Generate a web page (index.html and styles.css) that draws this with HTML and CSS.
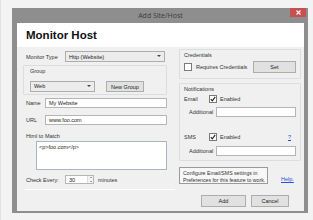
FILE: index.html
```html
<!DOCTYPE html>
<html>
<head>
<meta charset="utf-8">
<link rel="stylesheet" href="styles.css">
</head>
<body>
<div class="screen">
  <div class="window">
    <div class="titlebar">
      <span class="title">Add Site/Host</span>
      <span class="close"><svg width="5" height="5" viewBox="0 0 5 5"><path d="M0.5 0.5L4.5 4.5M4.5 0.5L0.5 4.5" stroke="#fff" stroke-width="1.1"/></svg></span>
    </div>
    <div class="client">
      <div class="header">Monitor Host</div>
      <div class="body">
        <div class="left">
          <div class="row r-type">
            <span class="lbl w39">Monitor Type</span>
            <div class="select s-type">Http (Website)<span class="caret"></span></div>
          </div>
          <div class="gbox g-group">
            <div class="glabel">Group</div>
            <div class="row">
              <div class="select s-web">Web<span class="caret"></span></div>
              <div class="btn b-new">New Group</div>
            </div>
          </div>
          <div class="row r-name">
            <span class="lbl w19">Name</span>
            <div class="input i-long">My Website</div>
          </div>
          <div class="row r-url">
            <span class="lbl w19">URL</span>
            <div class="input i-long">www.foo.com</div>
          </div>
          <div class="lbl html-lbl">Html to Match</div>
          <div class="textarea">&lt;p&gt;foo.com&lt;/p&gt;</div>
          <div class="row r-check">
            <span class="lbl w39">Check Every:</span>
            <div class="spin"><span class="spin-val">30</span><span class="spin-btns"><span class="up"></span><span class="down"></span></span></div>
            <span class="lbl minutes">minutes</span>
          </div>
          <div class="sep"></div>
        </div>
        <div class="right">
          <div class="gbox g-cred">
            <div class="glabel">Credentials</div>
            <div class="row r-req">
              <span class="cb"></span>
              <span class="lbl req">Requires Credentials</span>
              <div class="btn b-set">Set</div>
            </div>
          </div>
          <div class="gbox g-notif">
            <div class="glabel">Notifications</div>
            <div class="row r-en">
              <span class="lbl w25">Email</span>
              <span class="cb on"><svg width="6" height="6" viewBox="0 0 6 6"><path d="M0.8 3.2L2.3 4.8L5.2 0.9" fill="none" stroke="#222" stroke-width="1.1"/></svg></span>
              <span class="lbl en">Enabled</span>
            </div>
            <div class="row r-add">
              <span class="lbl w28">Additional</span>
              <div class="input i-add"></div>
            </div>
            <div class="row r-en r-sms">
              <span class="lbl w25">SMS</span>
              <span class="cb on"><svg width="6" height="6" viewBox="0 0 6 6"><path d="M0.8 3.2L2.3 4.8L5.2 0.9" fill="none" stroke="#222" stroke-width="1.1"/></svg></span>
              <span class="lbl en">Enabled</span>
              <span class="q">?</span>
            </div>
            <div class="row r-add r-add2">
              <span class="lbl w28">Additional</span>
              <div class="input i-add"></div>
            </div>
          </div>
          <div class="row r-tip">
            <div class="tip">Configure Email/SMS settings in<br>Preferences for this feature to work.</div>
            <span class="help">Help.</span>
          </div>
          <div class="row r-btns">
            <div class="btn b-add">Add</div>
            <div class="btn b-cancel">Cancel</div>
          </div>
        </div>
      </div>
    </div>
  </div>
</div>
</body>
</html>
```
FILE: styles.css
```css
* { box-sizing: border-box; }
html, body { margin: 0; padding: 0; }
body {
  width: 313px;
  height: 220px;
  overflow: hidden;
  background: #f3f3f3;
  font-family: "Liberation Sans", Arial, sans-serif;
  font-size: 5.5px;
  color: #333;
}
.screen {
  width: 313px;
  height: 220px;
  padding: 8px 0 0 11px;
  border-left: 1px solid #e2e2e2;
}
.window {
  width: 296px;
  height: 205px;
  background: #8e8e8e;
  display: flex;
  flex-direction: column;
  padding: 0 4px 2px 5px;
}
.titlebar {
  height: 15px;
  display: flex;
  align-items: flex-start;
}
.title {
  flex: 1;
  text-align: center;
  padding-left: 14px;
  line-height: 15px;
  font-size: 7px;
  color: #3c3c3c;
  font-family: "Open Sans", "Liberation Sans", sans-serif;
}
.close {
  width: 16px;
  height: 9px;
  margin-right: -2px;
  background: #c75050;
  display: flex;
  align-items: center;
  justify-content: center;
}
.client {
  flex: 1;
  background: #f0f0f0;
  display: flex;
  flex-direction: column;
}
.header {
  height: 24px;
  background: #fff;
  padding-left: 9px;
  font-size: 11.5px;
  font-weight: bold;
  color: #111;
  line-height: 14px;
  padding-top: 5px;
}
.body {
  display: flex;
  padding: 0 0 0 9px;
}
.left { width: 141px; }
.right { width: 122px; margin-left: 12px; }
.row { display: flex; align-items: center; }
.lbl { white-space: nowrap; }
.w39 { width: 39px; }
.w19 { width: 19px; }
.w25 { width: 25px; }
.w28 { width: 28px; }
.select, .input, .textarea, .spin {
  background: #fff;
  border: 1px solid #b5b5b5;
  color: #222;
  position: relative;
  white-space: nowrap;
  padding-left: 3px;
}
.select { background: #ececec; border-color: #adadad; display: flex; align-items: center; }
.caret {
  position: absolute;
  right: 3px;
  top: 3px;
  width: 0;
  height: 0;
  border-left: 2px solid transparent;
  border-right: 2px solid transparent;
  border-top: 2.5px solid #444;
}
.r-type { margin-top: 4px; height: 11px; }
.s-type { width: 100px; height: 11px; }
.gbox { border: 1px solid #dadde2; border-radius: 1px; }
.g-group {
  margin: 3px 0 0 -3px;
  width: 144px;
  height: 30px;
  padding: 1px 0 0 6px;
}
.glabel { line-height: 8px; }
.g-group .row { margin-top: 5px; }
.s-web { width: 65px; height: 11px; }
.btn {
  background: #e1e1e1;
  border: 1px solid #adadad;
  display: flex;
  align-items: center;
  justify-content: center;
  color: #222;
}
.b-new { width: 38px; height: 11px; margin-left: 11px; margin-top: 1px; }
.r-name { margin-top: 3px; height: 10px; }
.r-url { margin-top: 7px; height: 10px; }
.input { height: 10px; display: flex; align-items: center; }
.i-long { width: 122px; }
.html-lbl { margin-top: 7px; line-height: 8px; }
.textarea {
  margin: 1px 0 0 10px;
  width: 131px;
  height: 29px;
  padding: 2px 2px;
  border-color: #a9b6c4;
}
.r-check { margin-top: 5px; height: 9px; }
.spin { width: 29px; height: 9px; display: flex; align-items: center; justify-content: space-between; padding-right: 0; }
.spin-btns { width: 6px; height: 100%; display: flex; flex-direction: column; align-items: center; justify-content: space-around; border-left: 1px solid #ddd; background: #f3f3f3; }
.up { border-left: 1.5px solid transparent; border-right: 1.5px solid transparent; border-bottom: 1.5px solid #555; }
.down { border-left: 1.5px solid transparent; border-right: 1.5px solid transparent; border-top: 1.5px solid #555; }
.minutes { margin-left: 4px; }
.sep { margin-top: 5px; height: 1px; background: #a0a0a0; width: 150px; margin-left: -1px; border-bottom: 1px solid #fff; }

.g-cred { margin-top: 2px; height: 30px; padding: 0 4px 0 4px; }
.g-cred .glabel { margin-top: 1px; }
.r-req { margin-top: 2px; }
.cb {
  width: 8px; height: 8px;
  background: #fff;
  border: 1px solid #7a7a7a;
  display: flex; align-items: center; justify-content: center;
  flex-shrink: 0;
}
.req { margin-left: 4px; }
.b-set { width: 43px; height: 12px; margin-left: auto; }
.g-notif { margin-top: 4px; height: 78px; padding: 0 4px; }
.g-notif .glabel { margin-top: 1px; }
.r-en { height: 9px; margin-top: 1px; }
.en { margin-left: 3px; }
.r-add { margin-top: 4px; padding-left: 5px; }
.i-add { width: 81px; height: 10px; }
.r-sms { margin-top: 15px; }
.q { margin-left: auto; margin-right: 5px; color: #2a4fd6; text-decoration: underline; }
.r-add2 { margin-top: 5px; }
.r-tip { margin-top: 6px; align-items: flex-end; }
.tip {
  width: 89px;
  height: 17px;
  border: 1px solid #9a9a9a;
  background: #f7f7f7;
  padding: 2px 3px;
  line-height: 6.5px;
  font-size: 5.2px;
  white-space: nowrap;
}
.help { margin-left: 13px; color: #2a4fd6; text-decoration: underline; margin-bottom: 2px; }
.r-btns { margin-top: 11px; margin-left: 22px; }
.b-add { width: 45px; height: 12px; }
.b-cancel { width: 38px; height: 12px; margin-left: 5px; }
```
